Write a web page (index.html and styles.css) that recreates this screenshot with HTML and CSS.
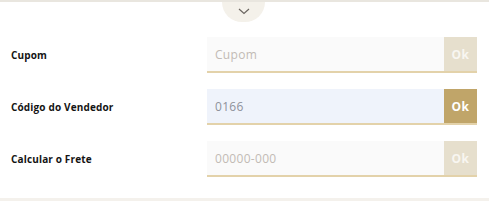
FILE: index.html
```html
<!doctype html>
<html>
<head>
    <meta charset="utf-8">
    <link rel="stylesheet" href="styles.css">
</head>
<body>

<div class="checkout-extras">
    <div class="toggle-tab">
        <svg width="12" height="7" viewBox="0 0 12 7">
            <path d="M1 1 L6 5.5 L11 1" fill="none" stroke="#6b6660" stroke-width="1.2"/>
        </svg>
    </div>

    <form class="extras-form" action="/" method="post">
        <label class="field-label" for="cupom">Cupom</label>
        <div class="field-group">
            <input id="cupom" class="field-input" type="text" placeholder="Cupom"/>
            <button type="button" class="ok-button" disabled>Ok</button>
        </div>

        <label class="field-label" for="vendedor">Código do Vendedor</label>
        <div class="field-group filled">
            <input id="vendedor" class="field-input" type="text" value="0166"/>
            <button type="button" class="ok-button">Ok</button>
        </div>

        <label class="field-label" for="cep">Calcular o Frete</label>
        <div class="field-group">
            <input id="cep" class="field-input" type="text" placeholder="00000-000"/>
            <button type="button" class="ok-button" disabled>Ok</button>
        </div>
    </form>
</div>

<div class="footer-strip"></div>

</body>
</html>
```

FILE: styles.css
```css
body {
    margin: 0;
    background: #fff;
    font-family: "Open Sans", "Liberation Sans", sans-serif;
}

.checkout-extras {
    position: relative;
    border-top: 2px solid #e9e6df;
    padding: 35px 12px 21px 11px;
}

.toggle-tab {
    position: absolute;
    top: 0;
    left: 222px;
    width: 43px;
    height: 20px;
    background: #f4f1ea;
    border-radius: 0 0 22px 22px;
    display: flex;
    align-items: center;
    justify-content: center;
}

.toggle-tab svg {
    margin-top: -2px;
}

.extras-form {
    display: grid;
    grid-template-columns: 1fr 270px;
    row-gap: 16px;
    align-items: center;
    margin: 0;
}

.field-label {
    font-size: 10px;
    font-weight: 700;
    letter-spacing: 0.15px;
    color: #141414;
}

.field-group {
    display: flex;
    height: 34px;
    border-bottom: 2px solid #e3d2aa;
}

.field-input {
    flex: 1;
    min-width: 0;
    border: none;
    outline: none;
    background: #fafafa;
    padding: 0 8px;
    font-family: "Open Sans", "Liberation Sans", sans-serif;
    font-size: 12px;
    letter-spacing: 0.3px;
    color: #8e919a;
}

.field-input::placeholder {
    color: #c2bbb5;
}

.field-group.filled .field-input {
    background: #eff3fb;
}

.ok-button {
    width: 33px;
    border: none;
    padding: 0;
    background: #c0a569;
    color: #fff;
    font-family: "Open Sans", "Liberation Sans", sans-serif;
    font-size: 12px;
    font-weight: 700;
    letter-spacing: 0.5px;
    cursor: pointer;
}

.ok-button:disabled {
    background: #e6dfcd;
    color: #f8f6f1;
    cursor: default;
}

.footer-strip {
    height: 4px;
    background: #f4f1ec;
}
```
